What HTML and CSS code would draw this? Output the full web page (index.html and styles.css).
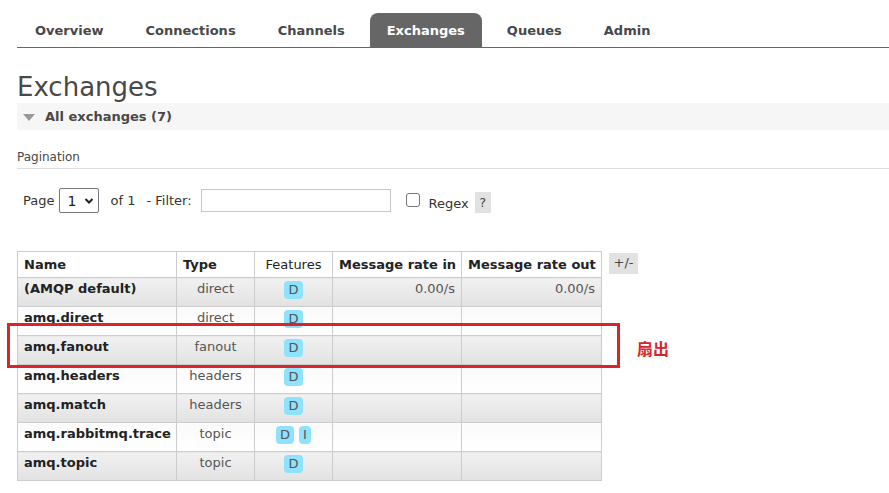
FILE: index.html
```html
<!DOCTYPE html>
<html>
<head>
<meta charset="utf-8">
<link rel="stylesheet" href="styles.css">
</head>
<body>
<ul class="tabs">
  <li class="tab">Overview</li>
  <li class="tab">Connections</li>
  <li class="tab">Channels</li>
  <li class="tab active">Exchanges</li>
  <li class="tab">Queues</li>
  <li class="tab">Admin</li>
</ul>
<h1 class="title">Exchanges</h1>
<div class="section-head"><span class="tri"></span>All exchanges (7)</div>
<div class="pag-label">Pagination</div>
<div class="filter-row">
  <span class="lbl">Page</span>
  <span class="select">1 <svg width="10" height="8" viewBox="0 0 10 8"><path d="M1.5 2 L5 5.5 L8.5 2" fill="none" stroke="#222" stroke-width="2"/></svg></span>
  <span class="lbl of">of 1</span>
  <span class="lbl">- Filter:</span>
  <span class="input"></span>
  <span class="check"></span>
  <span class="lbl regex">Regex</span>
  <span class="help">?</span>
</div>
<div class="table-wrap">
  <table class="list">
    <colgroup><col class="c1"><col class="c2"><col class="c3"><col class="c4"><col class="c5"></colgroup>
    <thead>
      <tr><th>Name</th><th>Type</th><th class="feat">Features</th><th>Message rate in</th><th>Message rate out</th></tr>
    </thead>
    <tbody>
      <tr class="alt1"><td class="name">(AMQP default)</td><td class="type">direct</td><td class="ctr"><span class="badge">D</span></td><td class="rate">0.00/s</td><td class="rate">0.00/s</td></tr>
      <tr class="alt2"><td class="name">amq.direct</td><td class="type">direct</td><td class="ctr"><span class="badge">D</span></td><td></td><td></td></tr>
      <tr class="alt1"><td class="name">amq.fanout</td><td class="type">fanout</td><td class="ctr"><span class="badge">D</span></td><td></td><td></td></tr>
      <tr class="alt2"><td class="name">amq.headers</td><td class="type">headers</td><td class="ctr"><span class="badge">D</span></td><td></td><td></td></tr>
      <tr class="alt1"><td class="name">amq.match</td><td class="type">headers</td><td class="ctr"><span class="badge">D</span></td><td></td><td></td></tr>
      <tr class="alt2"><td class="name">amq.rabbitmq.trace</td><td class="type">topic</td><td class="ctr"><span class="badge">D</span><span class="badge gap">I</span></td><td></td><td></td></tr>
      <tr class="alt1"><td class="name">amq.topic</td><td class="type">topic</td><td class="ctr"><span class="badge">D</span></td><td></td><td></td></tr>
    </tbody>
  </table>
  <span class="toggle">+/-</span>
</div>
<div class="mark"></div>
<div class="mark-label">扇出</div>
</body>
</html>
```

FILE: styles.css
```css
html, body {
  margin: 0;
  padding: 0;
  background: #fff;
}
body {
  padding-left: 17px;
  font-family: "DejaVu Sans", Verdana, sans-serif;
  font-size: 13px;
  color: #484848;
  position: relative;
  overflow: hidden;
}
.tabs {
  list-style: none;
  margin: 13px 0 0 0;
  padding: 0 0 0 1px;
  display: flex;
  border-bottom: 1px solid #666;
}
.tab {
  height: 34px;
  line-height: 35px;
  padding: 0 17px;
  margin-right: 8px;
  font-weight: bold;
  font-size: 13px;
  color: #484848;
  border-radius: 8px 8px 0 0;
}
.tab.active {
  background: #666;
  color: #fff;
  padding: 0 17px;
}
.title {
  margin: 24px 0 1px 0;
  font-size: 26px;
  line-height: 30px;
  font-weight: normal;
  color: #484848;
}
.section-head {
  height: 27px;
  line-height: 27px;
  background: #f6f6f6;
  font-weight: bold;
  display: flex;
  align-items: center;
}
.tri {
  width: 0;
  height: 0;
  border-left: 6px solid transparent;
  border-right: 6px solid transparent;
  border-top: 7px solid #999;
  margin: 1px 10px 0 6px;
}
.pag-label {
  margin-top: 19px;
  font-size: 12px;
  line-height: 16px;
  padding-bottom: 3px;
  border-bottom: 1px solid #ddd;
}
.filter-row {
  margin-top: 19px;
  height: 25px;
  display: flex;
  align-items: center;
  padding-left: 6px;
}
.lbl { color: #333; }
.select {
  margin-left: 5px;
  width: 40px;
  height: 25px;
  box-sizing: border-box;
  border: 1px solid #767676;
  border-radius: 2px;
  display: flex;
  align-items: center;
  gap: 8px;
  padding-left: 7px;
  font-size: 14px;
  color: #222;
}
.of { margin-left: 11px; margin-right: 11px; }
.input {
  margin-left: 9px;
  width: 190px;
  height: 23px;
  box-sizing: border-box;
  border: 1px solid #c8c8c8;
}
.check {
  margin-left: 15px;
  width: 14px;
  height: 14px;
  box-sizing: border-box;
  border: 1px solid #767676;
  border-radius: 3px;
  margin-top: -2px;
}
.regex { margin-left: 9px; margin-top: 6px; }
.help {
  margin-left: 6px;
  margin-top: 4px;
  width: 16px;
  height: 21px;
  line-height: 21px;
  text-align: center;
  background: #e2e2e2;
  font-size: 13px;
}
.table-wrap {
  margin-top: 38px;
  display: flex;
  align-items: flex-start;
}
.list {
  border-collapse: collapse;
  table-layout: fixed;
  width: 585px;
  border: 1px solid #ccc;
}
.c1 { width: 159px; }
.c2 { width: 78px; }
.c3 { width: 78px; }
.c4 { width: 129px; }
.c5 { width: 140px; }
.list th {
  border: 1px solid #ccc;
  background: #fff;
  text-align: left;
  padding: 4px 6px;
  line-height: 17px;
  font-weight: bold;
  white-space: nowrap;
  color: #222;
}
.list th.feat {
  font-weight: normal;
  text-align: center;
  padding: 4px 2px;
}
.list td {
  border: 1px solid #ccc;
  padding: 3px 6px 0 6px;
  height: 25px;
  box-sizing: content-box;
  line-height: 15px;
  vertical-align: top;
  white-space: nowrap;
  color: #555;
}
.list tr.alt1 td { background: linear-gradient(#f1f1f1, #e2e2e2); }
.list tr.alt2 td { background: linear-gradient(#fafafa, #fff); }
.list td.name { font-weight: bold; color: #222; }
.list td.type { text-align: center; }
.list td.ctr { text-align: center; }
.list td.rate { text-align: right; }
.badge {
  display: inline-block;
  padding: 0 4px;
  height: 18px;
  line-height: 18px;
  margin-top: 0;
  background: #8fe2fb;
  border-radius: 4px;
  color: #555;
  font-size: 13px;
}
.badge.gap { margin-left: 5px; }
.toggle {
  margin-left: 7px;
  margin-top: 2px;
  width: 29px;
  height: 21px;
  line-height: 19px;
  text-align: center;
  background: #e2e2e2;
  color: #484848;
}
.mark {
  position: absolute;
  left: 7px;
  top: 323px;
  width: 613px;
  height: 45px;
  box-sizing: border-box;
  border: 3px solid #d9252a;
}
.mark-label {
  position: absolute;
  left: 637px;
  top: 337px;
  font-family: "Noto Sans CJK SC", sans-serif;
  font-weight: bold;
  font-size: 16px;
  line-height: 22px;
  color: #d9252a;
}
```
